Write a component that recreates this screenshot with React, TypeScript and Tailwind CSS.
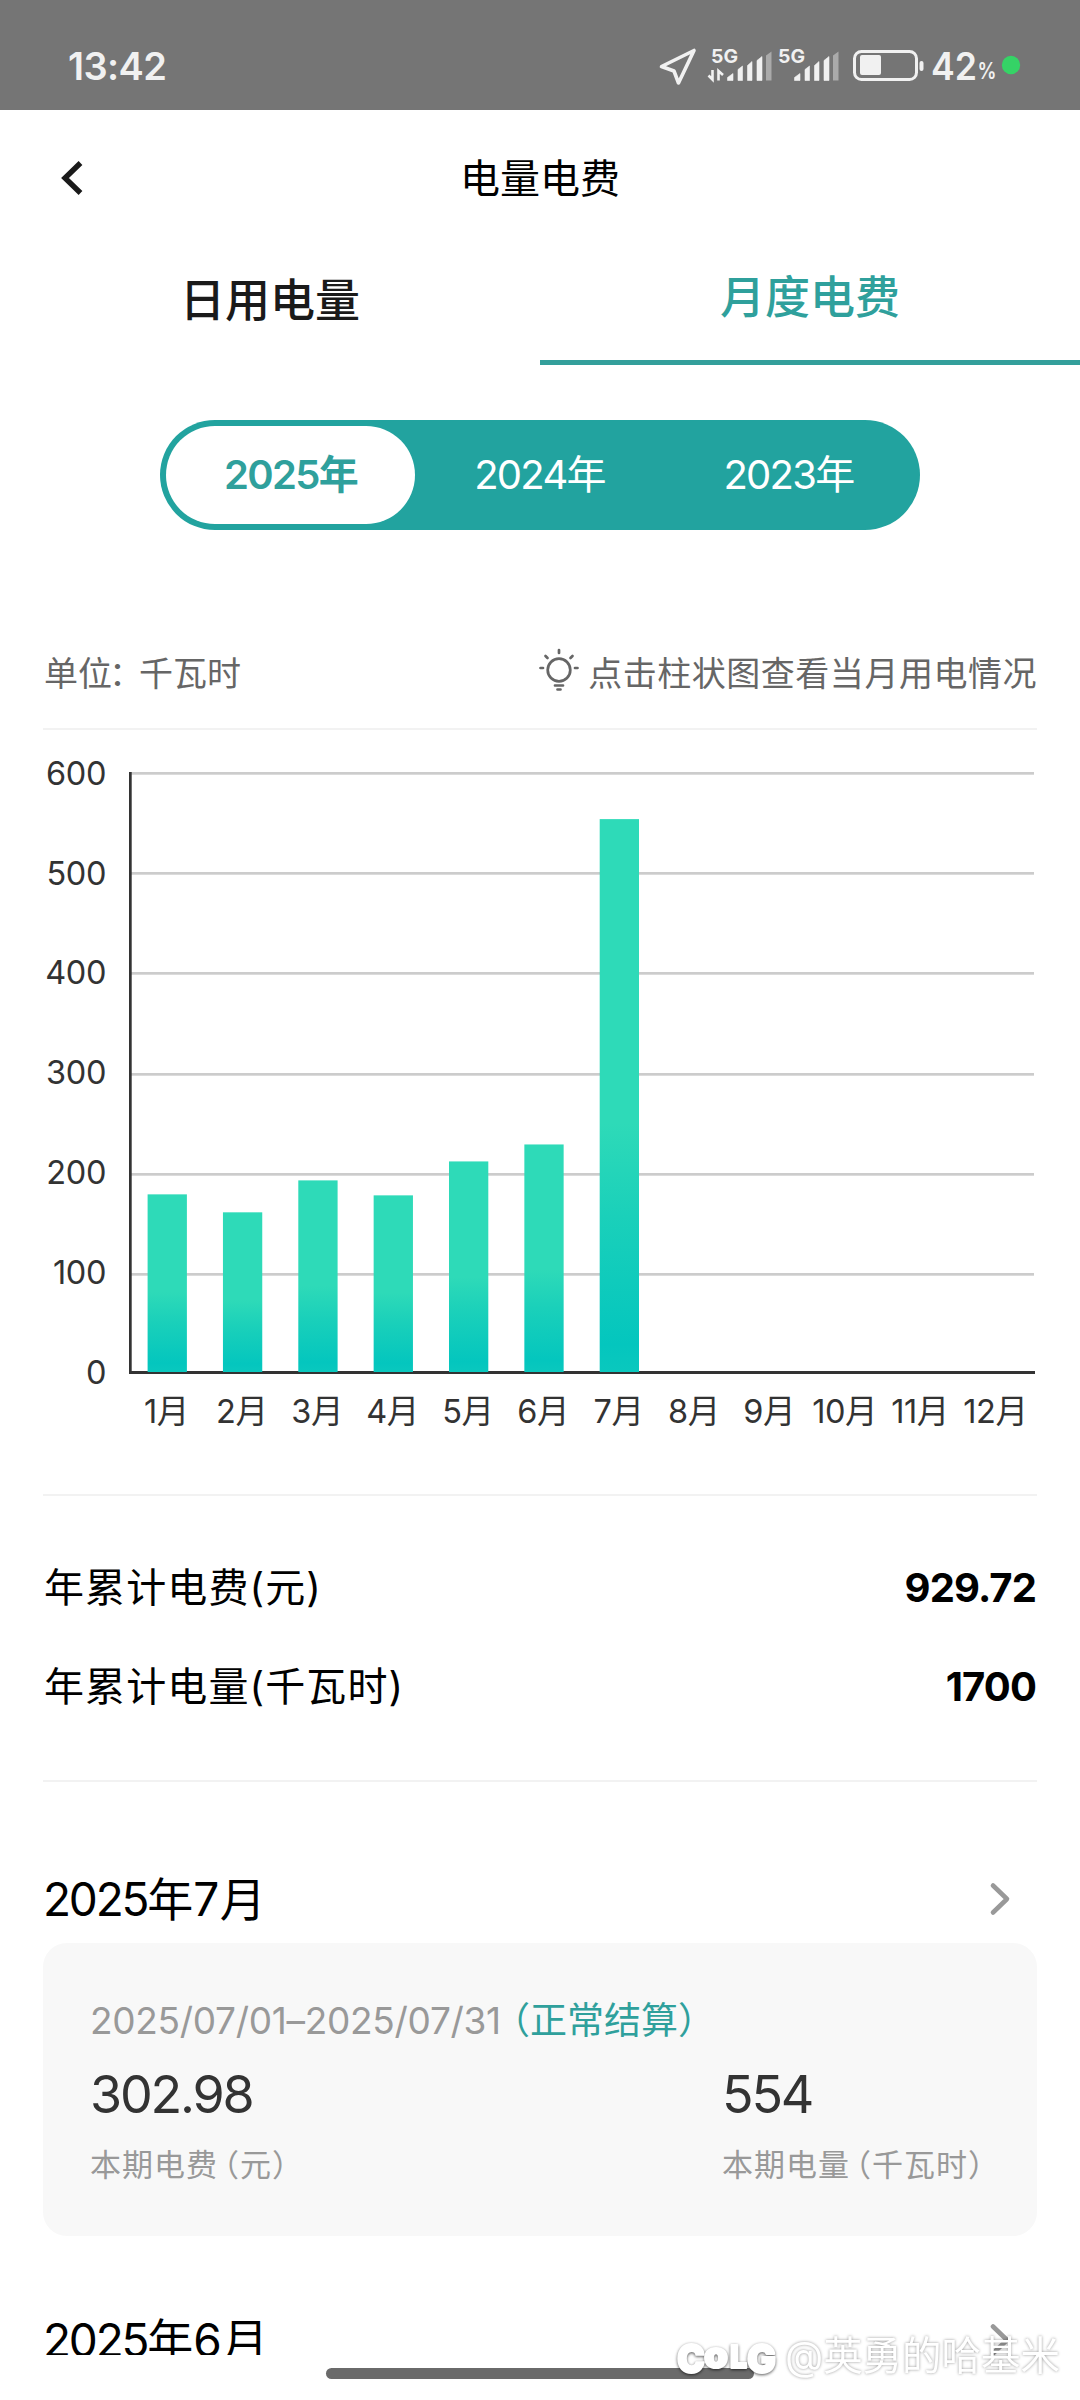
const years = ["2025年", "2024年", "2023年"];

const usage = [178, 160, 192, 177, 211, 228, 554];
const months = Array.from({ length: 12 }, (_, i) => `${i + 1}月`);
const ticks = [600, 500, 400, 300, 200, 100, 0];

function StatusBar() {
  return (
    <div className="flex h-[110px] shrink-0 bg-[#757575] pt-[34px] text-[#f1f1f1]">
      <span className="ml-[68px] text-[38px] leading-[64px] font-semibold tracking-[-0.6px]">13:42</span>
      <svg className="ml-auto h-[64px] w-[440px]" viewBox="640 34 440 64" fill="currentColor">
        <path
          d="M694 50.500L678.500 83L674 71L661.500 66.500Z"
          fill="none"
          stroke="currentColor"
          strokeWidth="3.600"
          strokeLinejoin="round"
        />
        {[0, 67].map((dx) => (
          <g key={dx} transform={`translate(${dx} 0)`}>
            <text x="711" y="63" fontSize="19" fontWeight="700" textLength="27" lengthAdjust="spacingAndGlyphs">
              5G
            </text>
            <path d="M727.500 80.500v-3l5.500-4v7zM738 80.500v-11l4.500-3.500v14.500zM747.500 80.500v-15l4.500-4v19zM757 80.500v-20l5-4v24z" stroke="currentColor" strokeWidth="0.600" strokeLinejoin="round" />
            <path d="M766 80.500v-25l5.500-4v29z" fill="#aaaaaa" />
          </g>
        ))}
        <path d="M708.500 75.500l4 4V70M718.500 80.500V71l4.500 4" fill="none" stroke="currentColor" strokeWidth="2.600" />
        <rect x="854.500" y="51.500" width="62" height="28" rx="7" fill="none" stroke="currentColor" strokeWidth="3" />
        <rect x="860" y="55" width="21" height="20" rx="2" />
        <rect x="919.500" y="61" width="4" height="10" rx="2" />
        <text x="931" y="80" fontSize="38" fontWeight="600" textLength="46" lengthAdjust="spacingAndGlyphs">
          42
        </text>
        <text x="977.500" y="78.500" fontSize="23" fontWeight="600" textLength="19" lengthAdjust="spacingAndGlyphs">
          %
        </text>
        <circle cx="1011" cy="65" r="9.200" fill="#35d366" />
      </svg>
    </div>
  );
}

function Chevron() {
  return (
    <svg className="h-[34px] w-[22px]" viewBox="0 0 22 34" fill="none" stroke="#999999" strokeWidth="4.600" strokeLinecap="round" strokeLinejoin="round">
      <path d="M4 3.500L18 17L4 30.500" />
    </svg>
  );
}

function BulbIcon() {
  return (
    <svg className="mb-[4px] h-[46px] w-[42px]" viewBox="0 0 42 46" fill="none" stroke="#666666" strokeWidth="2.700" strokeLinecap="round">
      <circle cx="21" cy="23" r="11.300" />
      <path d="M21 3v3M2.500 21h2.500M37 21h2.500M7.500 9l2 2M34.500 9l-2 2M17 38.500h8M19.500 42.500h3" />
    </svg>
  );
}

function UsageChart() {
  return (
    <svg className="block h-[764px] w-full shrink-0" viewBox="0 730 1080 764" fill="#333333" fontSize="32.500">
      <defs>
        <linearGradient id="bar" x1="0" y1="0" x2="0" y2="1">
          <stop offset="0" stopColor="#2edab8" />
          <stop offset="0.550" stopColor="#2edab8" />
          <stop offset="0.720" stopColor="#1ad0ba" />
          <stop offset="0.950" stopColor="#04c6be" />
          <stop offset="1" stopColor="#0ac8be" />
        </linearGradient>
      </defs>
      {ticks.map((tick, i) => (
        <g key={tick}>
          <text x="106" y={784.700 + i * 99.800} textAnchor="end" letterSpacing="-0.400">
            {tick}
          </text>
          {tick > 0 && <rect x="131" y={Math.round(772.200 + i * 100.100)} width="903" height="2.700" fill="#cccccc" />}
        </g>
      ))}
      <rect x="129" y="772" width="2.700" height="602" />
      <rect x="129" y="1371" width="906" height="3" />
      {usage.map((value, i) => (
        <rect key={i} x={147.600 + i * 75.350} y={1372 - value * 0.998} width="39.300" height={value * 0.998} fill="url(#bar)" />
      ))}
      {months.map((month, i) => (
        <text key={month} x={166.500 + i * 75.350} y="1423" textAnchor="middle" letterSpacing="-0.400">
          {month}
        </text>
      ))}
    </svg>
  );
}

function SummaryRow({ label, value }: { label: string; value: string }) {
  return (
    <div className="flex h-[99px] justify-between leading-[99px] text-black">
      <span className="pl-[1px] text-[40px] tracking-[1.1px]">{label}</span>
      <span className="pr-[1px] text-[40px] font-bold tracking-[-0.9px]">{value}</span>
    </div>
  );
}

function MonthTitle({ year, month }: { year: number; month: number }) {
  return (
    <div className="flex h-[88px] items-center justify-between pr-[26px]">
      <h2 className="text-[46px] leading-[88px] text-black">
        <span className="tracking-[-2.2px]">{year}</span>年<span className="tracking-[0.5px]">{month}</span>月
      </h2>
      <Chevron />
    </div>
  );
}

function Watermark() {
  return (
    <svg className="absolute top-[2330px] left-[670px] h-[56px] w-[400px]" viewBox="670 2330 400 56">
      <g
        className="drop-shadow-[0_1px_1.5px_rgba(0,0,0,0.65)]"
        fill="#ffffff"
        stroke="#ffffff"
        strokeWidth="2"
        strokeLinejoin="round"
        fontWeight="900"
      >
        <text x="677" y="2373" fontSize="40" textLength="28" lengthAdjust="spacingAndGlyphs">C</text>
        <text x="704" y="2368" fontSize="36" textLength="24" lengthAdjust="spacingAndGlyphs">o</text>
        <text x="730" y="2368" fontSize="31" textLength="17" lengthAdjust="spacingAndGlyphs">L</text>
        <text x="747" y="2373" fontSize="40" textLength="29" lengthAdjust="spacingAndGlyphs">G</text>
      </g>
      <text
        className="drop-shadow-[0_0_1.5px_rgba(0,0,0,0.4)]"
        x="785"
        y="2370"
        fontSize="40"
        fill="#ffffff"
        textLength="275"
        lengthAdjust="spacingAndGlyphs"
      >
        @英勇的哈基米
      </text>
    </svg>
  );
}

function App() {
  return (
    <div className="relative h-[2400px] w-[1080px] overflow-hidden bg-white font-['Inter','Noto_Sans_CJK_SC',sans-serif]">
      <div className="flex h-[2355px] flex-col overflow-hidden">
        <StatusBar />

        <header className="grid h-[136px] shrink-0 grid-cols-3 items-center">
          <svg className="mb-[1px] ml-[58px] h-[36px] w-[28px]" viewBox="0 0 28 36" fill="none" stroke="#1a1a1a" strokeWidth="5.400">
            <path d="M22.500 3L7 18L22.500 33" />
          </svg>
          <h1 className="pt-px text-center text-[40px] leading-[136px] text-black">电量电费</h1>
        </header>

        <nav className="grid h-[119px] shrink-0 grid-cols-2 text-center text-[45px] font-medium">
          <span className="leading-[109px] text-[#1a1a1a]">日用电量</span>
          <span className="border-b-[5px] border-[#339f9b] leading-[104px] text-[#2fa09c]">月度电费</span>
        </nav>

        <div className="mx-auto mt-[55px] flex h-[110px] w-[760px] shrink-0 rounded-full bg-[#22a39f] p-[6px] text-center text-[40px] leading-[98px] tracking-[-1.7px]">
          {years.map((year, i) => (
            <span
              key={year}
              className={i === 0 ? "w-[249px] rounded-full bg-white font-semibold text-[#2fa09c]" : "w-[249px] text-white"}
            >
              {year}
            </span>
          ))}
        </div>

        <div className="mx-[43px] mt-[86px] flex h-[114px] shrink-0 items-center justify-between border-b-2 border-[#f2f2f2] text-[34px] leading-[112px] text-[#666666]">
          <span className="pt-[3px] pl-[1px]">
            单位<span className="-mr-[4px] -ml-[3px]">：</span>千瓦时
          </span>
          <span className="flex items-center">
            <BulbIcon />
            <span className="ml-[8px] pt-[3px] tracking-[0.52px]">点击柱状图查看当月用电情况</span>
          </span>
        </div>

        <UsageChart />

        <div className="mx-[43px] shrink-0 border-y-2 border-[#f2f2f2] pt-[42px] pb-[44px]">
          <SummaryRow label="年累计电费(元)" value="929.72" />
          <SummaryRow label="年累计电量(千瓦时)" value="1700" />
        </div>

        <section className="mx-[43px] shrink-0 pt-[73px]">
          <MonthTitle year={2025} month={7} />
          <div className="h-[293px] rounded-[24px] bg-[#f8f8f8] pt-[52px] pl-[47px]">
            <p className="flex h-[51px] text-[37px] leading-[51px] whitespace-nowrap text-[#999999]">
              <span className="w-[403px] tracking-[-0.3px]">2025/07/01–2025/07/31</span>
              <span className="text-[#2fa09c]">（正常结算）</span>
            </p>
            <div className="flex text-[31px] leading-[43px] text-[#999999]">
              <div className="w-[632px]">
                <p className="text-[52px] leading-[97px] tracking-[-2.2px] text-[#333333]">302.98</p>
                <p className="tracking-[1px]">
                  本期电费<span className="-ml-[10px]">（元）</span>
                </p>
              </div>
              <div>
                <p className="text-[52px] leading-[97px] tracking-[-2.2px] text-[#333333]">554</p>
                <p className="tracking-[1px]">
                  本期电量<span className="-ml-[10px]">（千瓦时）</span>
                </p>
              </div>
            </div>
          </div>
        </section>

        <section className="mx-[43px] shrink-0 pt-[60px]">
          <MonthTitle year={2025} month={6} />
        </section>
      </div>

      <div className="mx-auto mt-[13px] h-[11px] w-[428px] rounded-full bg-[#6a6a6a]" />
      <Watermark />
    </div>
  );
}

export default App;
